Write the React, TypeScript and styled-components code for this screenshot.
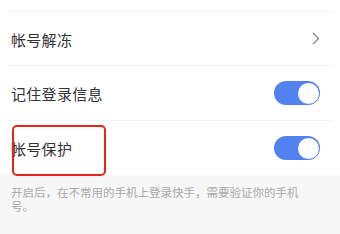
import React from "react";
import styled, { createGlobalStyle } from "styled-components";

const Global = createGlobalStyle`
  html, body { margin: 0; padding: 0; background: #ffffff; }
  body { font-family: "Noto Sans CJK SC", "Noto Sans", sans-serif; }
`;

const Page = styled.div`
  width: 340px;
  height: 234px;
  display: flex;
  flex-direction: column;
  background: #f7f7f7;
  overflow: hidden;
`;

const List = styled.div`
  background: #ffffff;
  display: flex;
  flex-direction: column;
  padding-top: 11px;
`;

const Row = styled.div<{ $h: number }>`
  position: relative;
  height: ${(p) => p.$h}px;
  display: flex;
  align-items: center;
  justify-content: space-between;
  border-top: 1px solid #f2f2f2;
  margin: 0 7px;
  padding-left: 4px;
  padding-right: 13px;
`;

const Label = styled.span`
  font-size: 15px;
  color: #333333;
  letter-spacing: 0.3px;
  padding-top: 1px;
`;

const RedBox = styled.div`
  position: absolute;
  left: 5px;
  top: 4px;
  width: 90px;
  height: 47px;
  border: 2px solid #e5251b;
  border-radius: 5px;
  pointer-events: none;
  z-index: 1;
`;

const Switch = styled.div`
  width: 46px;
  height: 24px;
  border-radius: 12px;
  background: #5281f0;
  position: relative;
  flex-shrink: 0;
`;

const Knob = styled.div`
  position: absolute;
  right: 1.5px;
  top: 1.5px;
  width: 21px;
  height: 21px;
  border-radius: 50%;
  background: #ffffff;
`;

const Note = styled.div`
  padding: 10px 37px 0 11px;
  font-size: 11.5px;
  line-height: 14px;
  color: #a9a9a9;
`;

const Chevron = () => (
  <svg width="8" height="13" viewBox="0 0 8 13">
    <path d="M1 1 L6.5 6.5 L1 12" fill="none" stroke="#8a8a8a" strokeWidth="1.3" />
  </svg>
);

export default function App() {
  return (
    <>
      <Global />
      <Page>
        <List>
          <Row $h={53}>
            <Label>帐号解冻</Label>
            <Chevron />
          </Row>
          <Row $h={54}>
            <Label>记住登录信息</Label>
            <Switch>
              <Knob />
            </Switch>
          </Row>
          <Row $h={54}>
            <Label>帐号保护</Label>
            <RedBox />
            <Switch>
              <Knob />
            </Switch>
          </Row>
        </List>
        <Note>开启后，在不常用的手机上登录快手，需要验证你的手机号。</Note>
      </Page>
    </>
  );
}
